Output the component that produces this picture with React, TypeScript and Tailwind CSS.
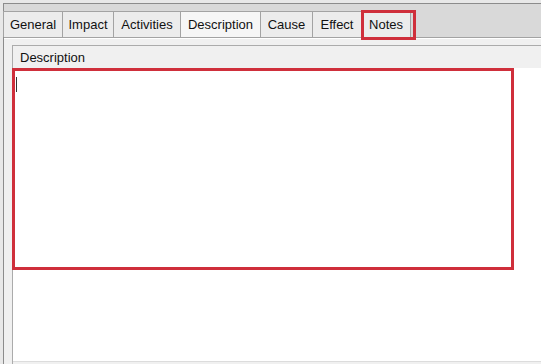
import React from 'react';

const tabs = [
  { label: 'General', width: 'w-[60px]' },
  { label: 'Impact', width: 'w-[51px]' },
  { label: 'Activities', width: 'w-[67px]' },
  { label: 'Description', width: 'w-[80px]', active: true },
  { label: 'Cause', width: 'w-[52px]' },
  { label: 'Effect', width: 'w-[49px]' },
  { label: 'Notes', width: 'w-[49px]' },
];

const App = () => {
  return (
    <div className="relative w-[541px] h-[364px] overflow-hidden bg-[#e8e8e8] flex flex-col font-['Liberation_Sans',Arial,sans-serif] text-[13px] text-[#111]">
      <div className="h-[3px] shrink-0" />
      <div className="flex flex-1 min-h-0">
        <div className="w-[3px] shrink-0" />
        <div className="flex-1 flex flex-col border-l border-t border-[#8c8c8c] bg-[#d9d9d9] min-w-0">
          {/* Tab strip */}
          <div className="flex items-end pt-[7px] h-[34px] shrink-0 border-b border-[#a3a3a3]">
            {tabs.map((tab, index) => (
              <div
                key={index}
                className={`${tab.width} h-[26px] flex items-center justify-center pt-px border-t border-r border-[#a3a3a3] ${index === 0 ? '-ml-px border-l' : ''} ${tab.active ? 'bg-[#f6f6f6]' : 'bg-[#ececec]'}`}
              >
                {tab.label}
              </div>
            ))}
          </div>

          {/* Panel */}
          <div className="flex-1 flex flex-col bg-[#f0f0f0] border-t border-white pl-[8px] pt-[6px] min-h-0">
            <div className="flex-1 flex flex-col border-l border-t border-[#ababab] min-h-0">
              <div className="h-[22px] shrink-0 flex items-center pl-[7px] pt-[2px]">Description</div>
              <div className="flex-1 bg-white border-b border-[#dcdcdc] mb-[2px]">
                <div className="-ml-px w-[502px] h-[202px] border-[3px] border-[#cf2f3b] pl-[1px] pt-[6px]">
                  <div className="w-px h-[15px] bg-[#333]" />
                </div>
              </div>
            </div>
          </div>
        </div>
      </div>

      {/* Annotation box over the Notes tab */}
      <div className="absolute left-[361px] top-[10px] w-[55px] h-[30px] border-[3px] border-[#cf2f3b]" />
    </div>
  );
};

export default App;
